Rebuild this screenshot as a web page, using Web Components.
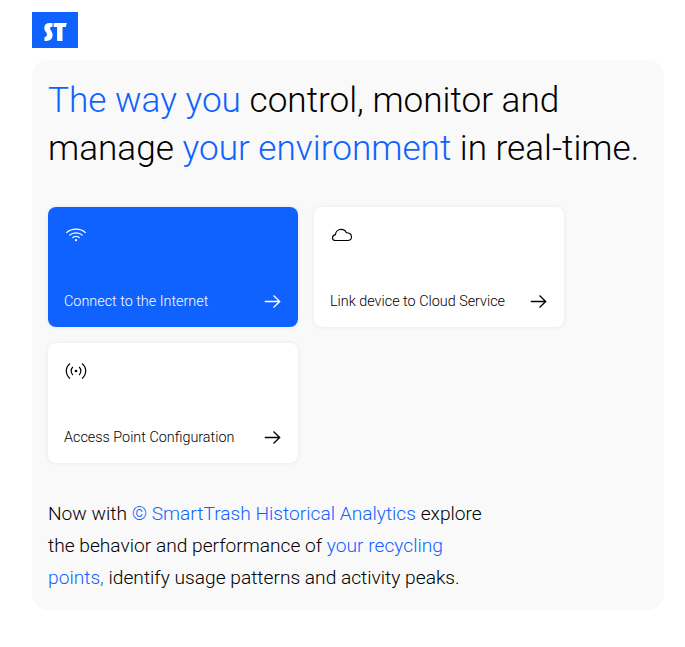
<!DOCTYPE html>
<html lang="en"><head><meta charset="utf-8"><title>SmartTrash</title>
<style>body{margin:0;background:#fff;color:#000;font-family:Roboto,"Liberation Sans",sans-serif}</style></head><body>
<st-app></st-app>
<script>
const define=(name,html)=>{const t=document.createElement('template');t.innerHTML=html;
customElements.define(name,class extends HTMLElement{constructor(){super();this.attachShadow({mode:'open'}).append(t.content.cloneNode(true));}});};
define('st-logo',`<style>:host{display:block;width:46px;height:36px}svg{display:block}</style>
<svg width="46" height="36" viewBox="0 0 46 36"><path fill="#0f62fe" d="M0 0h46v36H0z"/><path fill="#fff" d="M20.500 11h-2.900c-3.300 0-5.300 1.800-5.300 4.700 0 2 .8 3.300 2 4.800 1.200 1.500.9 3.900-1.200 4.400l-.6.200v3.900h1.800c3.800 0 6.300-2.200 6.300-5.700 0-2.300-.8-3.800-2-5.300-1.200-1.600-.5-2.900 1-3.200l.9-.2zM21.600 11h13.200l-1 3.900h-3.300V29h-5.400V14.900h-3.500z"/></svg>`);
define('st-arrow',`<style>:host{display:block;width:20px;height:20px}svg{display:block}</style><svg width="20" height="20" viewBox="0 0 20 20" fill="none" stroke="currentColor" stroke-width="1.300"><path d="M2.800 10.500h14.900M11.500 4.500l6.200 6-6.200 6"/></svg>`);
define('st-card',`<style>:host{box-sizing:border-box;display:flex;flex-direction:column;justify-content:space-between;height:120px;padding:16px;border-radius:8px;background:#fff;box-shadow:0 0 5px rgba(0,0,0,.07)}:host([active]){background:#0f62fe;color:#fff}.row{display:flex;align-items:center;justify-content:space-between;height:20px;font-size:14.39px;font-weight:300}::slotted(svg){display:block;width:24px;height:24px}</style><slot name="icon"></slot><div class="row"><span><slot></slot></span><st-arrow></st-arrow></div>`);
define('st-app',`<style>:host{display:block;padding:12px 21px 0 32px}main{box-sizing:border-box;height:550px;margin-top:12px;padding:16px;border-radius:16px;background:#f9f9f9}h1{margin:0;font-size:35.16px;line-height:48px;font-weight:300;white-space:nowrap}b{font-weight:inherit;color:#0f62fe}.grid{display:grid;grid-template-columns:250px 250px;gap:16px;margin-top:35px}p{margin:35px 0 0;font-size:19.18px;line-height:32px;font-weight:300;white-space:nowrap}</style>
<st-logo></st-logo><main><h1><b>The way you</b> control, monitor and<br>manage <b>your environment</b> in real-time.</h1>
<div class="grid"><st-card active><svg slot="icon" viewBox="0 0 24 24" fill="none" stroke="currentColor" stroke-width="1.100"><path d="M2.300 9.800a14 13 0 0 1 19.400 0M5.300 12.300a10 9.500 0 0 1 13.400 0M8.300 14.800a6 6 0 0 1 7.400 0"/><circle cx="12" cy="17.200" r="1.100" fill="currentColor" stroke="none"/></svg>Connect to the Internet</st-card>
<st-card><svg slot="icon" viewBox="0 0 24 24" fill="none" stroke="currentColor" stroke-width="1.100"><path d="M5.500 17.500H17.500C20 17.500 21.500 15.900 21.500 13.700C21.500 11.200 19.200 9.500 16.300 9.700C15.500 7.500 13.600 6.400 11.200 6.400C8 6.400 5.600 8.700 5.500 11.600C3.600 12 2.500 13.100 2.500 14.700C2.500 16.400 3.800 17.500 5.500 17.500z"/></svg>Link device to Cloud Service</st-card>
<st-card><svg slot="icon" viewBox="0 0 24 24" fill="none" stroke="currentColor" stroke-width="1.200"><path d="M6 4.500a9.500 9.500 0 0 0 0 15M18 4.500a9.500 9.500 0 0 1 0 15M8.900 8a5.500 5.500 0 0 0 0 8M15.100 8a5.500 5.500 0 0 1 0 8"/><circle cx="12" cy="12" r="1.300" fill="currentColor" stroke="none"/></svg>Access Point Configuration</st-card></div>
<p>Now with <b>© SmartTrash Historical Analytics</b> explore<br>the behavior and performance of <b>your recycling</b><br><b>points,</b> identify usage patterns and activity peaks.</p></main>`);
</script></body></html>
